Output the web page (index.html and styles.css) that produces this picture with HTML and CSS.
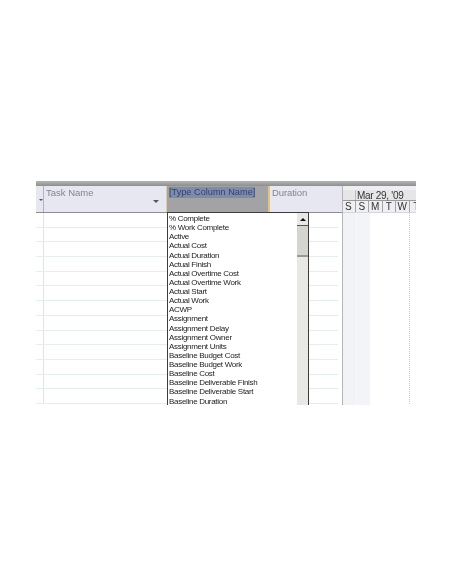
FILE: index.html
```html
<!DOCTYPE html>
<html lang="en">
<head>
    <meta charset="UTF-8">
    <meta name="viewport" content="width=device-width, initial-scale=1.0">
    <title>Type Column Name</title>
    <link rel="stylesheet" href="styles.css">
</head>
<body>
    <div class="sheet">
        <div class="top-bar"></div>
        <div class="main">
            <div class="table">
                <div class="header">
                    <div class="col-id"><span class="arrow small"></span></div>
                    <div class="col-task">Task Name<span class="arrow"></span></div>
                    <div class="col-type"><span class="type-name">[Type Column Name]</span></div>
                    <div class="col-duration">Duration</div>
                </div>
                <div class="rows">
                    <div class="row"></div><div class="row"></div><div class="row"></div>
                    <div class="row"></div><div class="row"></div><div class="row"></div>
                    <div class="row"></div><div class="row"></div><div class="row"></div>
                    <div class="row"></div><div class="row"></div><div class="row"></div>
                    <div class="row"></div>
                </div>
            </div>
            <div class="timeline">
                <div class="time-head">
                    <div class="week"><span class="week-gap"></span><span class="week-name">Mar 29, '09</span></div>
                    <div class="days">
                        <span>S</span><span>S</span><span>M</span><span>T</span><span>W</span><span class="cut">T</span>
                    </div>
                </div>
                <div class="time-body">
                    <div class="weekend"></div>
                    <div class="weekend light"></div>
                    <div class="weekday"></div>
                    <div class="dotted"></div>
                </div>
            </div>
        </div>
        <div class="dropdown">
            <ul class="list">
                <li>% Complete</li>
                <li>% Work Complete</li>
                <li>Active</li>
                <li>Actual Cost</li>
                <li>Actual Duration</li>
                <li>Actual Finish</li>
                <li>Actual Overtime Cost</li>
                <li>Actual Overtime Work</li>
                <li>Actual Start</li>
                <li>Actual Work</li>
                <li>ACWP</li>
                <li>Assignment</li>
                <li>Assignment Delay</li>
                <li>Assignment Owner</li>
                <li>Assignment Units</li>
                <li>Baseline Budget Cost</li>
                <li>Baseline Budget Work</li>
                <li>Baseline Cost</li>
                <li>Baseline Deliverable Finish</li>
                <li>Baseline Deliverable Start</li>
                <li>Baseline Duration</li>
            </ul>
            <div class="scroll">
                <div class="scroll-btn"><span class="up"></span></div>
                <div class="thumb"></div>
            </div>
        </div>
    </div>
</body>
</html>
```

FILE: styles.css
```css
body {
    margin: 0;
    background: white;
    font-family: "Liberation Sans", Arial, sans-serif;
}
.sheet {
    position: relative;
    width: 380px;
    height: 224px;
    margin: 181px 0 0 36px;
    overflow: hidden;
    filter: blur(0.3px);
}
.top-bar {
    height: 5px;
    background: linear-gradient(#b4b6b5, #8b8f8d);
}
.main {
    display: flex;
}
.table {
    flex: none;
    width: 306px;
    border-right: 1px solid #b4b4b8;
}
.header {
    display: flex;
    height: 26px;
    background: #e7e7f1;
    border-bottom: 1px solid #8d8d8d;
    font-size: 9.5px;
    color: #85858f;
}
.header > div {
    flex: none;
}
.col-id {
    position: relative;
    width: 7px;
    border-right: 1px solid #b4b4bc;
}
.col-task {
    position: relative;
    width: 120px;
    padding: 1px 0 0 2px;
}
.col-type {
    width: 99px;
    background: #a3a3a6;
    border-left: 1px solid #e6d08c;
    border-right: 2px solid #e6c283;
    padding: 1px 0 0 2px;
    color: #34426f;
    font-size: 9.2px;
}
.type-name {
    display: inline-block;
    background: #7f8bab;
    line-height: 11px;
}
.col-duration {
    padding: 1px 0 0 2px;
    letter-spacing: -0.1px;
}
.arrow {
    position: absolute;
    right: 7px;
    bottom: 9px;
    border: 3px solid transparent;
    border-top-color: #555;
    border-bottom-width: 0;
}
.arrow.small {
    right: 0;
    bottom: 11px;
    border-width: 2px 2px 0;
}
.rows {
    padding-right: 4px;
    background: linear-gradient(#e2e4e4, #e2e4e4) 7px 0 / 1px 100% no-repeat;
}
.row {
    height: 14.7px;
    box-sizing: border-box;
    border-bottom: 1px solid #e6eeea;
}
.timeline {
    flex: 1;
    min-width: 0;
}
.time-head {
    height: 27px;
    box-sizing: border-box;
    padding-top: 4px;
    background: #eeeef3;
    font-size: 10px;
    color: #333;
    border-bottom: 1px solid #d8d8dc;
}
.week {
    display: flex;
    height: 10px;
    line-height: 11px;
    background: #e6e6e8;
    border-bottom: 1px solid #9a9a9a;
}
.week-gap {
    width: 12px;
    border-right: 1px solid #bbb;
}
.week-name {
    padding-left: 1px;
    letter-spacing: -0.3px;
}
.days {
    display: flex;
    line-height: 11px;
    margin-left: -1px;
}
.days span {
    width: 13.5px;
    box-sizing: border-box;
    text-align: center;
    border-right: 1px solid #a5a5a5;
    flex: none;
}
.days .cut {
    border-right: none;
}
.time-body {
    display: flex;
    height: 193px;
}
.weekend {
    width: 12.5px;
    background: #f1f3f7;
}
.weekend.light {
    width: 13px;
    background: #f3f4f8;
    border-left: 1px solid #f8f8fa;
}
.weekday {
    width: 39px;
}
.dotted {
    width: 0;
    border-left: 1px dotted #c8c8c8;
}
.dropdown {
    position: absolute;
    left: 131px;
    top: 31px;
    width: 142px;
    height: 193px;
    display: flex;
    box-sizing: border-box;
    background: white;
    border: 1px solid #3c3c3c;
    border-width: 1px 1px 0 1px;
}
.list {
    flex: 1;
    margin: 0;
    padding: 1px 0 0 1px;
    list-style: none;
    font-size: 8px;
    line-height: 9.13px;
    letter-spacing: -0.3px;
    color: #222;
    white-space: nowrap;
}
.scroll {
    width: 11px;
    background: #eae8e4;
}
.scroll-btn {
    height: 13px;
    box-sizing: border-box;
    background: #eae8e4;
    border-bottom: 1px solid #555;
    display: flex;
    align-items: center;
    justify-content: center;
}
.up {
    border: 3px solid transparent;
    border-bottom-color: #111;
    border-top-width: 0;
}
.thumb {
    height: 31px;
    box-sizing: border-box;
    background: #d6d4cf;
    border-bottom: 2px solid #999;
}
```
